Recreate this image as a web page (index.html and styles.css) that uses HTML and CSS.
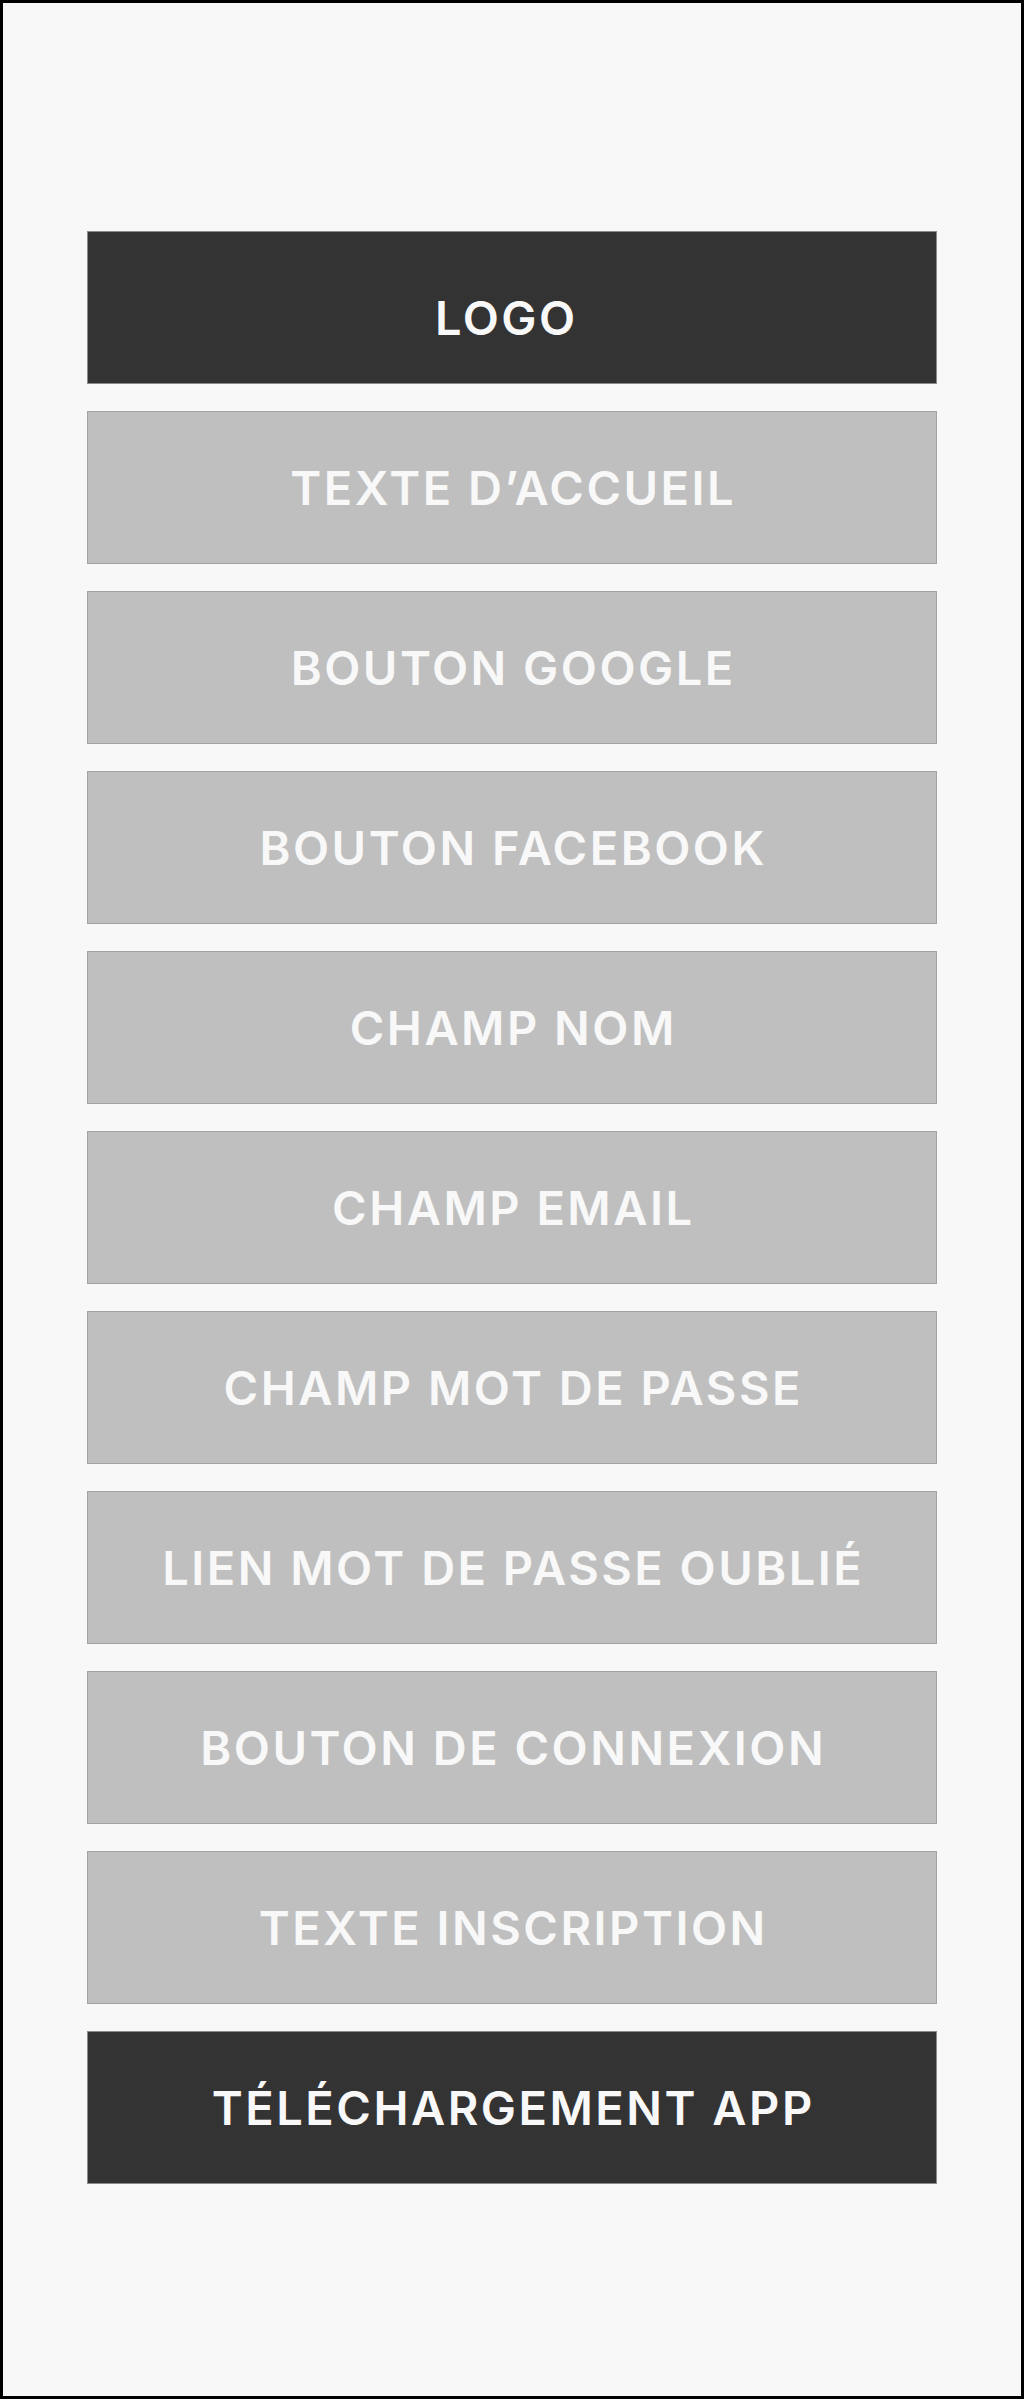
FILE: index.html
```html
<!DOCTYPE html>
<html lang="fr">
<head>
<meta charset="utf-8">
<title>Wireframe connexion</title>
<link rel="stylesheet" href="styles.css">
</head>
<body>
<div class="frame">
  <div class="stack">
    <div class="block dark logo">LOGO</div>
    <div class="block">TEXTE D’ACCUEIL</div>
    <div class="block">BOUTON GOOGLE</div>
    <div class="block">BOUTON FACEBOOK</div>
    <div class="block">CHAMP NOM</div>
    <div class="block">CHAMP EMAIL</div>
    <div class="block">CHAMP MOT DE PASSE</div>
    <div class="block">LIEN MOT DE PASSE OUBLIÉ</div>
    <div class="block">BOUTON DE CONNEXION</div>
    <div class="block">TEXTE INSCRIPTION</div>
    <div class="block dark">TÉLÉCHARGEMENT APP</div>
  </div>
</div>
</body>
</html>
```
FILE: styles.css
```css
html, body {
  margin: 0;
  padding: 0;
}
body {
  background: #f8f8f8;
  font-family: Inter, "Open Sans", sans-serif;
}
.frame {
  box-sizing: border-box;
  width: 1024px;
  height: 2399px;
  border: 3px solid #000;
  background: #f8f8f8;
  padding: 228px 84px 0 84px;
}
.stack {
  display: flex;
  flex-direction: column;
  gap: 27px;
}
.block {
  box-sizing: border-box;
  height: 153px;
  background: #bfbfbf;
  border: 1px solid #a3a3a3;
  display: flex;
  align-items: center;
  justify-content: center;
  color: #f8f8f8;
  font-size: 47px;
  font-weight: 600;
  letter-spacing: 2.5px;
  padding-left: 2.5px;
}
.block.dark {
  background: #333333;
  border-color: #8a8a8a;
}
.block.logo {
  padding-top: 20px;
  padding-right: 14px;
}
```
